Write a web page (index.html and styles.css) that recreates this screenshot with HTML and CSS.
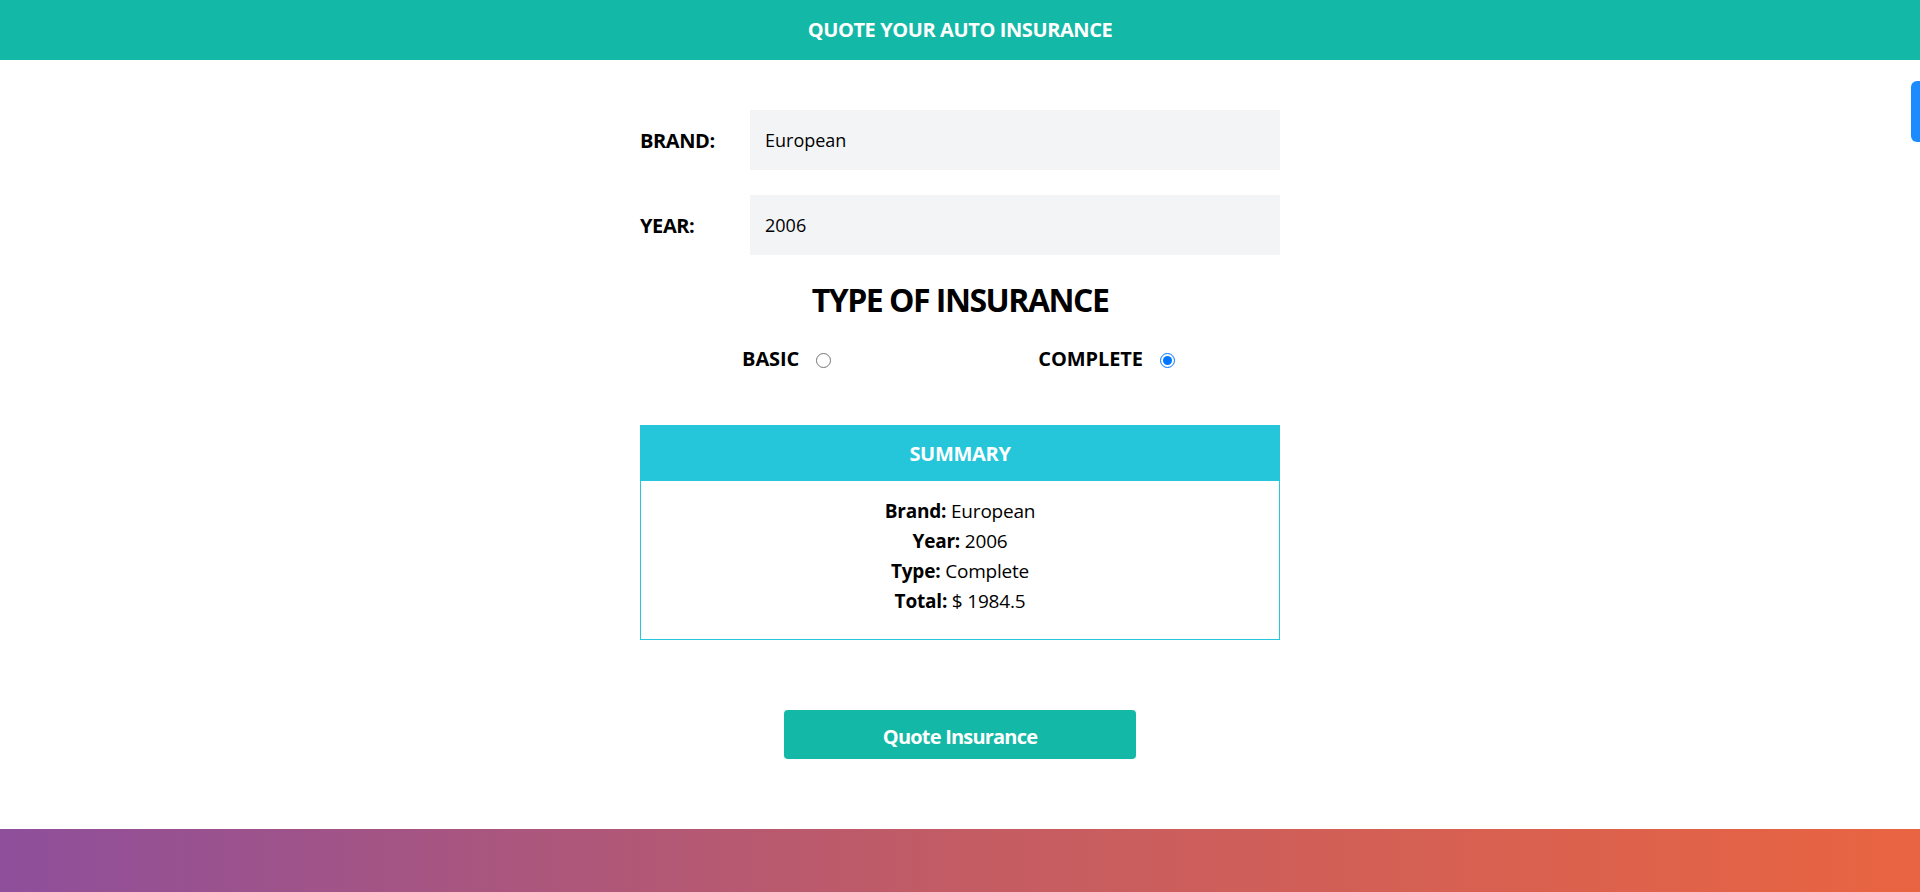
FILE: index.html
```html
<!DOCTYPE html>
<html lang="en">
<head>
<meta charset="utf-8">
<title>Quote your auto insurance</title>
<link rel="stylesheet" href="styles.css">
</head>
<body>
<div class="page">
  <header class="topbar">
    <h1 class="topbar-title">QUOTE YOUR AUTO INSURANCE</h1>
  </header>
  <main class="main">
    <form class="form">
      <div class="field">
        <label class="field-label" for="brand">BRAND:</label>
        <select class="field-select" id="brand" name="brand">
          <option value="european" selected>European</option>
          <option value="american">American</option>
          <option value="asian">Asian</option>
        </select>
      </div>
      <div class="field field-last">
        <label class="field-label" for="year">YEAR:</label>
        <select class="field-select" id="year" name="year">
          <option value="2006" selected>2006</option>
          <option value="2007">2007</option>
        </select>
      </div>
      <h2 class="section-title">TYPE OF INSURANCE</h2>
      <div class="radio-row">
        <label class="radio-option">BASIC <input class="radio" type="radio" name="plan" value="basic"></label>
        <label class="radio-option">COMPLETE <input class="radio" type="radio" name="plan" value="complete" checked></label>
      </div>
      <section class="summary">
        <h3 class="summary-head">SUMMARY</h3>
        <div class="summary-body">
          <p class="summary-line"><strong>Brand:</strong> European</p>
          <p class="summary-line"><strong>Year:</strong> 2006</p>
          <p class="summary-line"><strong>Type:</strong> Complete</p>
          <p class="summary-line"><strong>Total:</strong> $ 1984.5</p>
        </div>
      </section>
      <button class="quote-btn" type="button">Quote Insurance</button>
    </form>
  </main>
  <footer class="footer"></footer>
</div>
<div class="side-tab"></div>
</body>
</html>
```

FILE: styles.css
```css
* {
  box-sizing: border-box;
}

html, body {
  margin: 0;
  padding: 0;
}

body {
  font-family: "Open Sans", "Noto Sans", sans-serif;
  color: #000;
  background: #fff;
}

.page {
  min-height: 100vh;
  display: flex;
  flex-direction: column;
}

.topbar {
  height: 60px;
  background: #14b8a6;
  display: flex;
  align-items: center;
  justify-content: center;
}

.topbar-title {
  margin: 0;
  color: #fff;
  font-size: 20px;
  font-weight: 700;
  letter-spacing: -0.4px;
  line-height: 60px;
}

.main {
  flex: 1;
}

.form {
  width: 640px;
  margin: 50px auto 0;
}

.field {
  display: flex;
  align-items: center;
  margin-bottom: 25px;
}

.field-last {
  margin-bottom: 0;
}

.field-label {
  flex: 0 0 110px;
  font-size: 20px;
  font-weight: 700;
  letter-spacing: -0.4px;
}

.field-select {
  flex: 1;
  height: 60px;
  padding: 0 15px;
  border: none;
  border-radius: 0;
  background: #f3f4f6;
  font-family: inherit;
  font-size: 18px;
  color: #000;
  -webkit-appearance: none;
  appearance: none;
}

.section-title {
  margin: 23px 0 23px;
  text-align: center;
  font-size: 32px;
  line-height: 44px;
  font-weight: 700;
  letter-spacing: -1.5px;
}

.radio-row {
  height: 28px;
  display: flex;
  justify-content: space-around;
  align-items: center;
}

.radio-option {
  display: flex;
  align-items: center;
  font-size: 20px;
  font-weight: 700;
  letter-spacing: -0.1px;
  line-height: 28px;
}

.radio {
  width: 15px;
  height: 15px;
  margin: 2px 3px 0 17px;
}

.summary {
  margin-top: 52px;
  border: 1px solid #26c6da;
}

.summary-head {
  margin: 0;
  height: 55px;
  line-height: 56px;
  background: #26c6da;
  color: #fff;
  text-align: center;
  font-size: 20px;
  font-weight: 700;
  letter-spacing: -0.3px;
}

.summary-body {
  padding: 15px 0 23px;
  text-align: center;
}

.summary-line {
  margin: 0;
  font-size: 19px;
  line-height: 30px;
  letter-spacing: -0.2px;
}

.quote-btn {
  display: block;
  width: 55%;
  height: 49px;
  margin: 70px auto 0;
  border: none;
  border-radius: 4px;
  background: #14b8a6;
  color: #fff;
  font-family: inherit;
  font-size: 20px;
  line-height: 51px;
  font-weight: 700;
  letter-spacing: -0.8px;
  cursor: pointer;
}

.footer {
  height: 63px;
  background: linear-gradient(to right, #8e4f9b, #c35c64 50%, #e96441);
}

.side-tab {
  position: fixed;
  top: 81px;
  right: 0;
  width: 9px;
  height: 61px;
  background: #1a8cff;
  border-radius: 6px 0 0 6px;
}
```
